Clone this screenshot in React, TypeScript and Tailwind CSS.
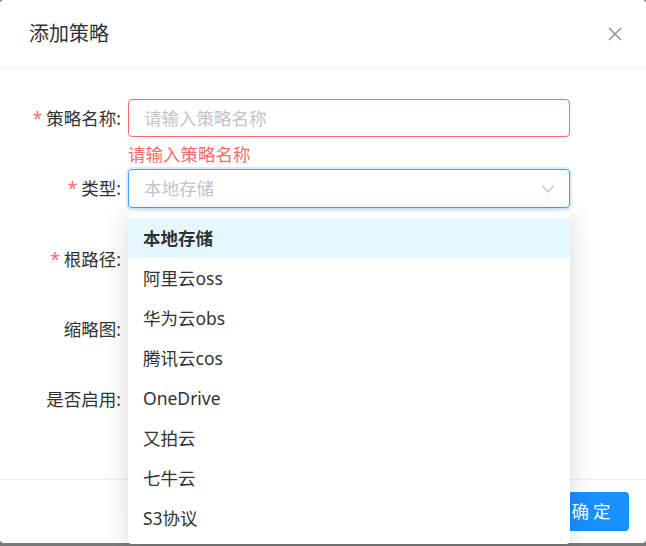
import { useState } from "react";

const options = ["本地存储", "阿里云oss", "华为云obs", "腾讯云cos", "OneDrive", "又拍云", "七牛云", "S3协议"];

const Label = ({ text, required }: { text: string; required?: boolean }) => (
  <label className="w-[128px] shrink-0 pr-[7px] text-right text-[17.5px] leading-[38px] text-[#333]">
    {required && <span className="mr-[4px] text-[#f56c6c]">*</span>}
    {text}:
  </label>
);

const App = () => {
  const [active] = useState(0);

  return (
    <div
      className="h-[546px] w-[646px] overflow-hidden bg-[#7a7a7a]"
      style={{ fontFamily: '"Noto Sans", "Noto Sans CJK SC", sans-serif' }}
    >
      <div className="relative flex h-[543px] flex-col rounded-[4px] bg-white">
        {/* header */}
        <div className="flex h-[68px] shrink-0 items-center justify-between border-b border-[#ebeef5] pl-[29px] pr-[23px]">
          <span className="text-[20px] text-[#303133]">添加策略</span>
          <svg width="16" height="16" viewBox="0 0 16 16" className="text-[#909399]">
            <path d="M2 2L14 14M14 2L2 14" stroke="currentColor" strokeWidth="1.5" />
          </svg>
        </div>

        {/* form */}
        <div className="flex-1 pt-[31px]">
          <div className="flex">
            <Label text="策略名称" required />
            <div className="w-[442px]">
              <div className="flex h-[38px] items-center rounded-[4px] border border-[#f56c6c] px-[15px] text-[17.5px] text-[#c0c4cc]">
                请输入策略名称
              </div>
              <div className="h-[32px] text-[17.5px] leading-[34px] text-[#f56c6c]">请输入策略名称</div>
            </div>
          </div>

          <div className="flex">
            <Label text="类型" required />
            <div className="w-[442px] pb-[32px]">
              <div className="flex h-[39px] items-center justify-between rounded-[4px] border border-[#409eff] pl-[15px] pr-[14px] text-[17.5px] text-[#c0c4cc] shadow-[0_0_0_2px_rgba(64,158,255,0.2)]">
                <span>本地存储</span>
                <svg width="14" height="10" viewBox="0 0 14 10">
                  <path d="M1 1.5L7 8L13 1.5" fill="none" stroke="#c0c4cc" strokeWidth="1.2" />
                </svg>
              </div>
            </div>
          </div>

          <div className="flex">
            <Label text="根路径" required />
            <div className="w-[442px] pb-[32px]">
              <div className="h-[38px] rounded-[4px] border border-[#dcdfe6]" />
            </div>
          </div>

          <div className="flex">
            <Label text="缩略图" />
            <div className="w-[442px] pb-[32px]">
              <div className="h-[38px] w-[120px] rounded-[4px] border border-[#dcdfe6]" />
            </div>
          </div>

          <div className="flex">
            <Label text="是否启用" />
            <div className="flex h-[38px] w-[442px] items-center">
              <div className="h-[24px] w-[48px] rounded-full bg-[#dcdfe6]" />
            </div>
          </div>
        </div>

        {/* footer */}
        <div className="flex h-[64px] shrink-0 items-start justify-end gap-[12px] border-t border-[#ebeef5] pr-[17px] pt-[12px]">
          <button className="h-[39px] w-[74px] rounded-[4px] border border-[#dcdfe6] text-[17.5px] tracking-[4px] text-[#606266]">
            取消
          </button>
          <button className="h-[39px] w-[74px] rounded-[4px] bg-[#1890ff] pl-[2px] text-[17.5px] tracking-[4px] text-white">
            确定
          </button>
        </div>

        {/* select dropdown */}
        <div className="absolute left-[128px] top-[212px] w-[442px] rounded-[4px] bg-white py-[6px] shadow-[0_3px_26px_rgba(0,0,0,0.16)]">
          {options.map((o, i) => (
            <div
              key={o}
              className={
                i === active
                  ? "flex h-[40px] items-center bg-[#e6f7ff] px-[15px] text-[17.5px] font-bold text-[#303133]"
                  : "flex h-[40px] items-center px-[15px] text-[17.5px] text-[#333]"
              }
            >
              {o}
            </div>
          ))}
        </div>
      </div>
    </div>
  );
};

export default App;
